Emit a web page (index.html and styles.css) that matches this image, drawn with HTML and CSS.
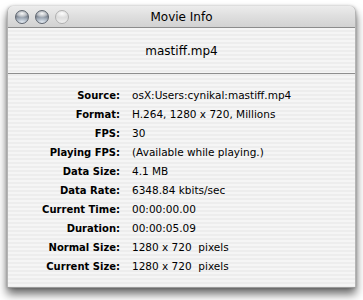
FILE: index.html
```html
<!DOCTYPE html>
<html>
<head>
<meta charset="utf-8">
<link rel="stylesheet" href="styles.css">
</head>
<body>
<div class="window">
  <div class="titlebar">
    <div class="buttons">
      <span class="btn"></span>
      <span class="btn"></span>
      <span class="btn off"></span>
    </div>
    <div class="title">Movie Info</div>
  </div>
  <div class="filename">mastiff.mp4</div>
  <div class="info">
    <div class="lbl">Source:</div><div class="val">osX:Users:cynikal:mastiff.mp4</div>
    <div class="lbl">Format:</div><div class="val">H.264, 1280 x 720, Millions</div>
    <div class="lbl">FPS:</div><div class="val">30</div>
    <div class="lbl">Playing FPS:</div><div class="val">(Available while playing.)</div>
    <div class="lbl">Data Size:</div><div class="val">4.1 MB</div>
    <div class="lbl">Data Rate:</div><div class="val">6348.84 kbits/sec</div>
    <div class="lbl">Current Time:</div><div class="val">00:00:00.00</div>
    <div class="lbl">Duration:</div><div class="val">00:00:05.09</div>
    <div class="lbl">Normal Size:</div><div class="val">1280 x 720&nbsp; pixels</div>
    <div class="lbl">Current Size:</div><div class="val">1280 x 720&nbsp; pixels</div>
  </div>
</div>
</body>
</html>
```
FILE: styles.css
```css
html, body {
  margin: 0;
  padding: 0;
  background: #ffffff;
}
body {
  font-family: "DejaVu Sans", "Liberation Sans", sans-serif;
  color: #000;
  width: 363px;
  height: 300px;
  overflow: hidden;
}
.window {
  margin: 6px 0 0 7px;
  width: 349px;
  height: 282px;
  box-sizing: border-box;
  border-radius: 6px 6px 0 0;
  border-left: 1px solid #b4b4b4;
  border-right: 1px solid #b4b4b4;
  border-bottom: 1px solid #9a9a9a;
  box-shadow: 0 6px 10px rgba(0,0,0,0.6), 0 0 3px rgba(0,0,0,0.25);
  background: repeating-linear-gradient(to bottom, #ededed 0, #ededed 2px, #f5f5f5 2px, #f5f5f5 4px);
  overflow: hidden;
}
.titlebar {
  height: 22px;
  box-sizing: border-box;
  border-bottom: 1px solid #8c8c8c;
  background: linear-gradient(to bottom, #ececec 0%, #dedede 50%, #d2d2d2 100%);
  border-radius: 6px 6px 0 0;
  display: flex;
  align-items: center;
  position: relative;
}
.buttons {
  display: flex;
  gap: 6px;
  padding-left: 7px;
  padding-top: 1px;
}
.btn {
  width: 14px;
  height: 14px;
  border-radius: 50%;
  box-sizing: border-box;
  border: 1px solid #5f6670;
  background:
    radial-gradient(ellipse 60% 35% at 50% 22%, rgba(255,255,255,0.95) 0, rgba(255,255,255,0.5) 60%, rgba(255,255,255,0) 100%),
    radial-gradient(ellipse 80% 55% at 50% 95%, #e4ebf2 0, rgba(200,210,222,0.6) 50%, rgba(200,210,222,0) 100%),
    linear-gradient(to bottom, #6f7781 0%, #7d8692 45%, #a9b4c0 100%);
}
.btn.off {
  border-color: #b0b0b0;
  background:
    radial-gradient(ellipse 60% 35% at 50% 22%, rgba(255,255,255,0.95) 0, rgba(255,255,255,0) 100%),
    linear-gradient(to bottom, #d6d6d6 0%, #dcdcdc 50%, #f0f0f0 100%);
}
.title {
  position: absolute;
  left: 0;
  right: 0;
  top: 0;
  height: 21px;
  line-height: 22px;
  text-align: center;
  font-size: 12px;
  pointer-events: none;
}
.filename {
  height: 46px;
  box-sizing: border-box;
  border-bottom: 1px solid #8e8e8e;
  display: flex;
  align-items: center;
  justify-content: center;
  font-size: 12px;
  padding-top: 1px;
}
.info {
  display: grid;
  grid-template-columns: 112px 1fr;
  column-gap: 12px;
  row-gap: 0;
  padding-top: 12px;
  font-size: 10.5px;
}
.lbl {
  text-align: right;
  font-weight: bold;
  font-size: 10px;
  height: 19px;
  line-height: 19px;
}
.val {
  height: 19px;
  line-height: 19px;
  white-space: nowrap;
}
```
